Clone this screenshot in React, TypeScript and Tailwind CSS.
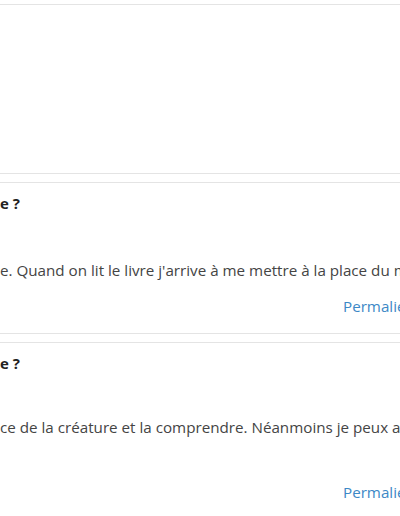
import React from 'react';

interface AnswerProps {
  title: string;
  body: string;
  gapBody: string;
  gapLink: string;
}

const Answer: React.FC<AnswerProps> = ({ title, body, gapBody, gapLink }) => {
  return (
    <div className="border-y border-[#e4e4e4] bg-white pt-[10px] pb-[17px] overflow-hidden">
      <div className="text-[15px] leading-[20px] font-bold text-[#222] whitespace-nowrap">{title}</div>
      <p className={`${gapBody} text-[15.2px] leading-[20px] text-[#444] whitespace-nowrap`}>{body}</p>
      <div className={`${gapLink} flex justify-end`}>
        <a className="text-[15.2px] leading-[20px] text-[#3c88c6] whitespace-nowrap w-[57px] overflow-hidden">Permalien</a>
      </div>
    </div>
  );
};

export default function App() {
  return (
    <div className="w-[400px] h-[516px] bg-white overflow-hidden font-['Open_Sans',sans-serif]">
      <div className="mt-[4px] h-[170px] border-y border-[#e4e4e4] bg-white" />
      <div className="mt-[8px] flex flex-col gap-[8px]">
        <Answer
          title="e ?"
          body="e. Quand on lit le livre j'arrive à me mettre à la place du monstre"
          gapBody="mt-[47px]"
          gapLink="mt-[16px]"
        />
        <Answer
          title="e ?"
          body="ce de la créature et la comprendre. Néanmoins je peux aussi"
          gapBody="mt-[44px]"
          gapLink="mt-[45px]"
        />
      </div>
    </div>
  );
}
